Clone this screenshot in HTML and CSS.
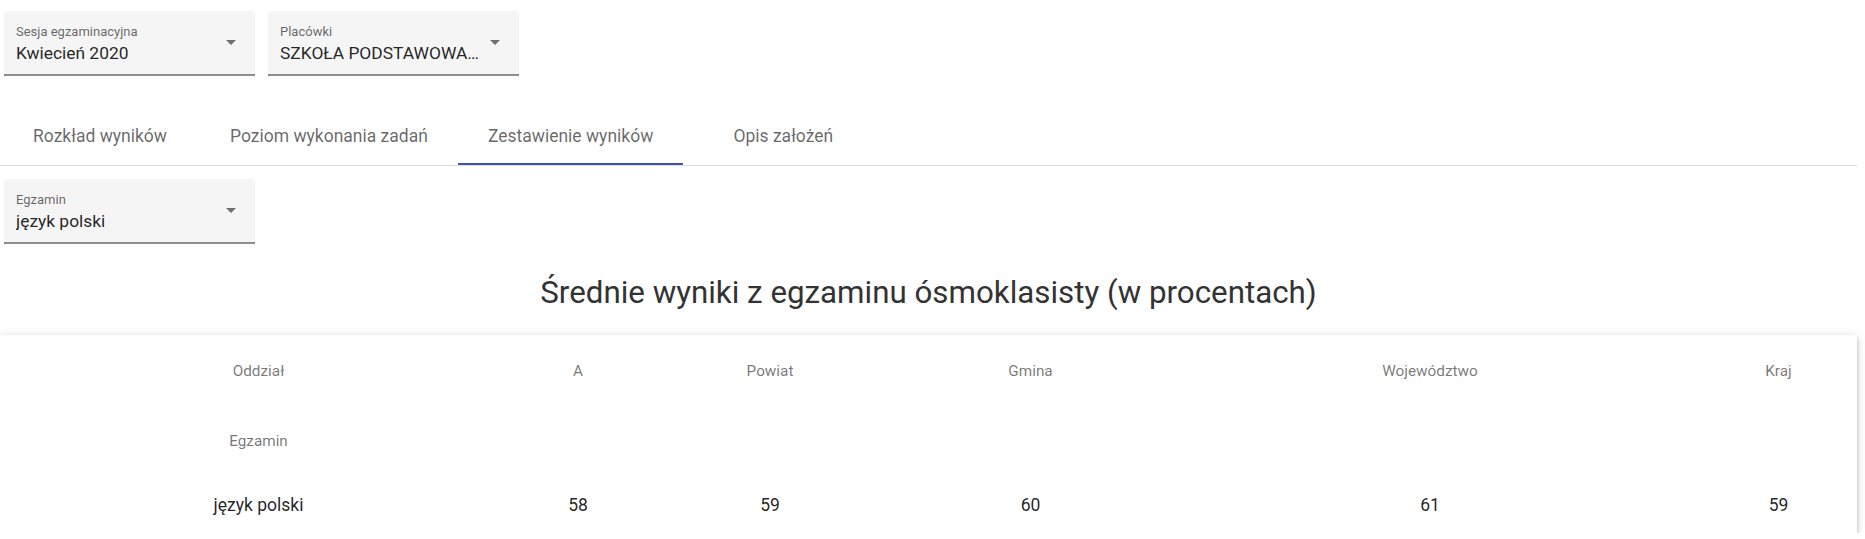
FILE: index.html
```html
<!DOCTYPE html>
<html lang="pl">
<head>
<meta charset="utf-8">
<title>Zestawienie wyników</title>
<link rel="stylesheet" href="styles.css">
</head>
<body>
<div class="page">
  <div class="filters">
    <div class="select">
      <div class="select-text">
        <div class="label">Sesja egzaminacyjna</div>
        <div class="value">Kwiecień 2020</div>
      </div>
      <div class="select-arrow"><span class="caret"></span></div>
    </div>
    <div class="select">
      <div class="select-text">
        <div class="label">Placówki</div>
        <div class="value">SZKOŁA PODSTAWOWA NR 1 W MIEŚCIE</div>
      </div>
      <div class="select-arrow"><span class="caret"></span></div>
    </div>
  </div>

  <div class="tabs">
    <div class="tab">Rozkład wyników</div>
    <div class="tab">Poziom wykonania zadań</div>
    <div class="tab active">Zestawienie wyników</div>
    <div class="tab">Opis założeń</div>
  </div>

  <div class="filters exam">
    <div class="select">
      <div class="select-text">
        <div class="label">Egzamin</div>
        <div class="value">język polski</div>
      </div>
      <div class="select-arrow"><span class="caret"></span></div>
    </div>
  </div>

  <h2 class="title">Średnie wyniki z egzaminu ósmoklasisty (w procentach)</h2>

  <div class="card">
    <table class="results">
      <colgroup>
        <col class="c1"><col class="c2"><col class="c3"><col class="c4"><col class="c5"><col class="c6">
      </colgroup>
      <thead>
        <tr class="head1">
          <th>Oddział</th><th>A</th><th>Powiat</th><th>Gmina</th><th>Województwo</th><th>Kraj</th>
        </tr>
        <tr class="head2">
          <th>Egzamin</th><th></th><th></th><th></th><th></th><th></th>
        </tr>
      </thead>
      <tbody>
        <tr class="data">
          <td>język polski</td><td>58</td><td>59</td><td>60</td><td>61</td><td>59</td>
        </tr>
      </tbody>
    </table>
  </div>
</div>
</body>
</html>
```
FILE: styles.css
```css
html, body {
  margin: 0;
  background: #ffffff;
}

body {
  padding: 11px 8px 0 0;
  font-family: Roboto, "Noto Sans", "Liberation Sans", sans-serif;
  overflow: hidden;
}

.page {
  width: 1857px;
}

.filters {
  display: flex;
  gap: 13px;
  padding-left: 4px;
}

.filters.exam {
  margin-top: 13px;
}

.select {
  width: 251px;
  height: 65px;
  box-sizing: border-box;
  display: flex;
  align-items: stretch;
  padding: 0 12px;
  background: #f5f5f5;
  border-radius: 4px 4px 0 0;
  border-bottom: 2px solid #8e8e8e;
}

.select-text {
  flex: 1;
  min-width: 0;
  padding-top: 13px;
}

.label {
  font-size: 13px;
  line-height: 15px;
  color: rgba(0, 0, 0, 0.6);
  white-space: nowrap;
}

.value {
  margin-top: 3px;
  font-size: 17.4px;
  line-height: 22px;
  color: rgba(0, 0, 0, 0.87);
  white-space: nowrap;
  overflow: hidden;
  text-overflow: ellipsis;
}

.select-arrow {
  width: 24px;
  flex: none;
  display: flex;
  align-items: center;
  justify-content: center;
}

.caret {
  width: 0;
  height: 0;
  border-left: 5px solid transparent;
  border-right: 5px solid transparent;
  border-top: 5px solid rgba(0, 0, 0, 0.54);
}

.tabs {
  display: flex;
  margin-top: 34px;
  border-bottom: 1px solid #e0e0e0;
}

.tab {
  min-width: 200px;
  height: 55px;
  box-sizing: border-box;
  padding: 0 30px 4px;
  display: flex;
  align-items: center;
  justify-content: center;
  font-size: 17.5px;
  color: rgba(0, 0, 0, 0.6);
  white-space: nowrap;
}

.tab.active {
  box-shadow: inset 0 -2px 0 #3f51b5;
}

.title {
  margin: 31px 0 0;
  font-size: 31.3px;
  line-height: 36px;
  font-weight: 400;
  text-align: center;
  color: #333333;
}

.card {
  margin-top: 24px;
  background: #ffffff;
  box-shadow: 0 2px 4px -1px rgba(0, 0, 0, 0.2), 0 4px 5px 0 rgba(0, 0, 0, 0.14), 0 1px 10px 0 rgba(0, 0, 0, 0.12);
}

.results {
  width: 100%;
  border-collapse: collapse;
  table-layout: fixed;
}

.results .c1 { width: 517px; }
.results .c2 { width: 122px; }
.results .c3 { width: 262px; }
.results .c4 { width: 259px; }
.results .c5 { width: 540px; }
.results .c6 { width: 157px; }

.results th,
.results td {
  padding: 0;
  text-align: center;
  vertical-align: middle;
}

.results th {
  font-size: 15.3px;
  font-weight: 400;
  color: rgba(0, 0, 0, 0.54);
}

.results td {
  font-size: 17.5px;
  color: rgba(0, 0, 0, 0.87);
}

.head1 { height: 71px; }
.head2 { height: 70px; }
.data { height: 57px; }
```
